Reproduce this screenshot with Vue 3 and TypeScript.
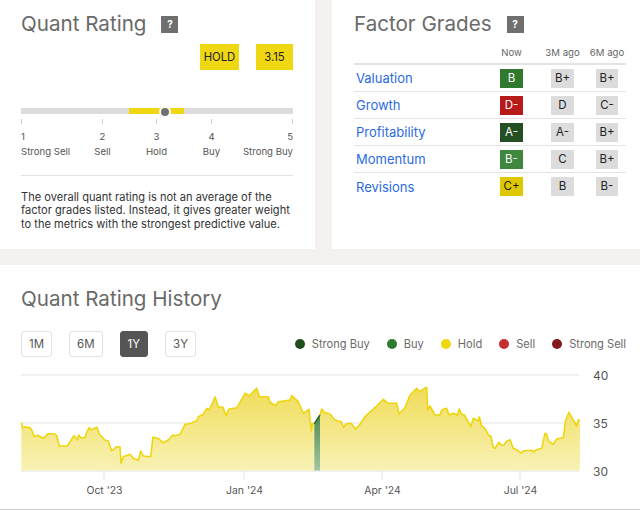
<script setup lang="ts">
const scale = [
  { n: 1, label: 'Strong Sell' },
  { n: 2, label: 'Sell' },
  { n: 3, label: 'Hold' },
  { n: 4, label: 'Buy' },
  { n: 5, label: 'Strong Buy' }
]

const factors = [
  { name: 'Valuation', now: 'B', tone: 'buy', m3: 'B+', m6: 'B+' },
  { name: 'Growth', now: 'D-', tone: 'sell', m3: 'D', m6: 'C-' },
  { name: 'Profitability', now: 'A-', tone: 'strong', m3: 'A-', m6: 'B+' },
  { name: 'Momentum', now: 'B-', tone: 'buy2', m3: 'C', m6: 'B+' },
  { name: 'Revisions', now: 'C+', tone: 'hold', m3: 'B', m6: 'B-' }
]

const ranges = ['1M', '6M', '1Y', '3Y']

const legend = [
  { label: 'Strong Buy', color: '#1f4d1c' },
  { label: 'Buy', color: '#2f7a2f' },
  { label: 'Hold', color: '#f0d80f' },
  { label: 'Sell', color: '#c62f2f' },
  { label: 'Strong Sell', color: '#84191b' }
]

// traced at 3x from the chart, each run has its own x offset
const run = (ox: number, pts: number[][]) =>
  pts.map(([x, y]) => [+(x / 3 + ox).toFixed(1), +(y / 3).toFixed(1)])

const before = [
  ...run(0, [[64,143],[68,158],[75,155],[80,158],[88,156],[95,165],[103,185],[113,181],[130,190],[145,176],[162,176],[170,182],[178,213],[202,213],[222,182],[232,195],[236,180],[243,188],[255,188],[260,172],[268,157],[272,165],[291,157],[298,177],[315,195],[325,198],[335,228],[350,215],[360,216],[363,265],[370,245],[390,238],[400,250],[415,256],[422,228],[430,243],[452,245],[459,186],[478,192],[483,198],[490,203],[505,195],[518,180],[525,182],[540,178],[555,148],[575,145],[580,140],[590,138],[595,125],[610,118],[620,100],[627,105],[640,80]]),
  ...run(215, [[0,65],[10,95],[24,97],[33,122],[42,102],[66,98],[90,55],[103,62],[125,40],[133,65],[160,65],[165,82],[183,92],[190,80],[225,75],[230,62],[250,80],[265,115],[282,103],[289,168],[292,146],[298,146]])
]
const jump = run(215, [[298,146],[315,120]])
const after = [
  ...run(215, [[315,120],[320,102],[328,112],[345,117],[360,135],[378,140],[386,157],[392,147],[408,145],[422,162],[435,148],[450,125],[480,98],[490,88],[505,73],[520,85],[545,85],[552,117],[570,98],[585,60],[605,40],[615,50],[632,37]]),
  ...run(425, [[5,38],[8,105],[15,93],[30,120],[45,120],[50,105],[65,100],[72,120],[85,115],[97,120],[103,102],[110,118],[118,120],[138,155],[145,130],[160,138],[163,125],[170,153],[178,158],[192,182],[197,182],[205,218],[210,220],[222,202],[228,210],[238,210],[243,200],[255,194],[265,220],[275,224],[287,234],[297,227],[320,226],[327,231],[332,225],[350,220],[360,175],[365,178],[370,198],[385,208],[395,192],[415,188],[422,135],[432,112],[455,153],[460,135],[465,135]])
]

const base = 95.5
const toLine = (pts: number[][]) => pts.map((p) => p.join(',')).join(' ')
const toArea = (pts: number[][]) =>
  `${pts[0][0]},${base} ${toLine(pts)} ${pts[pts.length - 1][0]},${base}`

const grid = [
  { y: 0, label: '40' },
  { y: 48, label: '35' },
  { y: 96, label: '30' }
]
const months = [
  { x: 104, label: "Oct '23" },
  { x: 244, label: "Jan '24" },
  { x: 382, label: "Apr '24" },
  { x: 520, label: "Jul '24" }
]
</script>

<template>
  <div class="page">
    <div class="top">
      <section class="card rating">
        <div class="head">
          <h2>Quant Rating</h2>
          <span class="help">?</span>
        </div>
        <div class="badges">
          <span class="badge">HOLD</span>
          <span class="badge">3.15</span>
        </div>
        <div class="track">
          <div class="fill"></div>
          <div class="dot"></div>
        </div>
        <div class="scale">
          <div v-for="s in scale" :key="s.n" class="step">
            <i></i>
            <span class="num">{{ s.n }}</span>
            <span class="lbl">{{ s.label }}</span>
          </div>
        </div>
        <p class="note">
          The overall quant rating is not an average of the factor grades listed. Instead, it gives greater weight
          to the metrics with the strongest predictive value.
        </p>
      </section>

      <section class="card grades">
        <div class="head">
          <h2>Factor Grades</h2>
          <span class="help">?</span>
        </div>
        <div class="row header">
          <span></span>
          <span>Now</span>
          <span>3M ago</span>
          <span>6M ago</span>
        </div>
        <div v-for="f in factors" :key="f.name" class="row">
          <a class="name">{{ f.name }}</a>
          <span class="grade" :class="f.tone">{{ f.now }}</span>
          <span class="grade">{{ f.m3 }}</span>
          <span class="grade">{{ f.m6 }}</span>
        </div>
      </section>
    </div>

    <section class="card history">
      <h2>Quant Rating History</h2>
      <div class="controls">
        <div class="ranges">
          <button v-for="r in ranges" :key="r" :class="{ active: r === '1Y' }">{{ r }}</button>
        </div>
        <ul class="legend">
          <li v-for="l in legend" :key="l.label">
            <i :style="{ background: l.color }"></i>{{ l.label }}
          </li>
        </ul>
      </div>
      <svg class="chart" width="640" height="126" viewBox="0 375 640 126">
        <defs>
          <linearGradient id="holdFill" gradientUnits="userSpaceOnUse" x1="0" y1="0" x2="0" y2="96">
            <stop offset="0" stop-color="#efd94a" />
            <stop offset="1" stop-color="#f8f2b6" />
          </linearGradient>
          <linearGradient id="buyFill" gradientUnits="userSpaceOnUse" x1="0" y1="40" x2="0" y2="96">
            <stop offset="0" stop-color="#4f8a55" />
            <stop offset="1" stop-color="#a3c6a0" />
          </linearGradient>
        </defs>
        <g transform="translate(0 375)">
          <line v-for="g in grid" :key="g.y" x1="21" x2="579" :y1="g.y" :y2="g.y" class="gridline" />
          <polygon :points="toArea(before)" fill="url(#holdFill)" />
          <polygon :points="toArea(jump)" fill="url(#buyFill)" />
          <polygon :points="toArea(after)" fill="url(#holdFill)" />
          <polyline :points="toLine(before)" class="line" />
          <polyline :points="toLine(jump)" class="line green" />
          <polyline :points="toLine(after)" class="line" />
          <text v-for="g in grid" :key="g.label" x="593" :y="g.y + 5" class="ytick">{{ g.label }}</text>
          <g v-for="m in months" :key="m.x">
            <line :x1="m.x" :x2="m.x" y1="96" y2="105" class="gridline" />
            <text :x="m.x + 0.5" y="119" text-anchor="middle" class="xtick">{{ m.label }}</text>
          </g>
        </g>
      </svg>
    </section>
  </div>
</template>

<style>
html, body {
  background: #f5f1f0;
}
</style>

<style scoped>
.page {
  width: 640px;
  height: 510px;
  overflow: hidden;
  font-family: Inter, "Liberation Sans", sans-serif;
  border-bottom: 1px solid #cfcfcf;
  box-sizing: border-box;
}

.top {
  display: flex;
  justify-content: space-between;
  height: 249px;
  margin-bottom: 16px;
}

.card {
  background: #fff;
  box-sizing: border-box;
}

.rating {
  width: 315px;
  padding: 8px 22px 0 21px;
}

.grades {
  width: 308px;
  padding: 8px 14px 0 22px;
}

.head {
  display: flex;
  align-items: center;
  height: 32px;
}

h2 {
  margin: 0;
  font-size: 20.6px;
  font-weight: 400;
  line-height: 32px;
  color: #6a6a6a;
}

.help {
  width: 17px;
  height: 17px;
  margin-left: 15px;
  background: #6f6f6f;
  color: #fff;
  font-size: 10px;
  font-weight: 700;
  line-height: 17px;
  text-align: center;
}

.badges {
  display: flex;
  justify-content: flex-end;
  gap: 17px;
  margin-top: 4px;
}

.badge {
  width: 39px;
  height: 26px;
  background: #efd711;
  color: #222;
  font-size: 11.3px;
  line-height: 27px;
  text-align: center;
}

.badge:last-child {
  width: 37px;
}

.track {
  position: relative;
  height: 6px;
  margin-top: 38px;
  background: #dcdcdc;
}

.fill {
  position: absolute;
  left: 108px;
  width: 55px;
  height: 100%;
  background: #efd711;
}

.dot {
  position: absolute;
  left: 138px;
  top: -2px;
  width: 8px;
  height: 8px;
  border: 2px solid #fff;
  border-radius: 50%;
  background: #6f6f6f;
}

.scale {
  display: grid;
  grid-template-columns: 81px 54px 55px 81px 1px;
  margin-top: 5px;
  height: 56px;
  border-bottom: 1px solid #e3e3e3;
}

.step {
  display: flex;
  flex-direction: column;
  align-items: center;
  width: 1px;
  font-size: 9.6px;
  color: #555;
  white-space: nowrap;
}

.step:first-child {
  align-items: flex-start;
}

.step:last-child {
  align-items: flex-end;
}

.step i {
  width: 1px;
  height: 5px;
  background: #cfcfcf;
}

.num {
  margin-top: 5px;
  line-height: 15px;
}

.lbl {
  line-height: 16px;
}

.note {
  margin: 15px 0 0;
  font-size: 11.1px;
  line-height: 13.4px;
  color: #333;
}

.row {
  display: grid;
  grid-template-columns: 146px 23px 28px 23px 22px 22px 8px;
  align-items: center;
  height: 27px;
  border-bottom: 1px solid #e4e4e4;
  box-sizing: border-box;
}

.row > :nth-child(2) {
  grid-column: 2;
}

.row > :nth-child(3) {
  grid-column: 4;
}

.row > :nth-child(4) {
  grid-column: 6;
}

.row:last-child {
  border-bottom: 0;
}

.header {
  height: 18px;
  margin-top: 7px;
  border-bottom-width: 2px;
  font-size: 9.6px;
  line-height: 12px;
  color: #666;
  white-space: nowrap;
  text-align: center;
}

.header span {
  display: flex;
  justify-content: center;
  align-self: start;
}

.name {
  padding-left: 2px;
  font-size: 13px;
  color: #2b6be0;
}

.grade {
  height: 19px;
  background: #dcdcdc;
  color: #222;
  font-size: 11.5px;
  line-height: 19px;
  text-align: center;
}

.buy {
  background: #2f7a2f;
  color: #fff;
}

.buy2 {
  background: #3f863f;
  color: #fff;
}

.strong {
  background: #234f22;
  color: #fff;
}

.sell {
  background: #b81a1a;
  color: #fff;
}

.hold {
  background: #e0c800;
  color: #222;
}

.history {
  height: 244px;
}

.history h2 {
  padding: 18px 0 0 21px;
  line-height: 32px;
}

.controls {
  display: flex;
  justify-content: space-between;
  align-items: center;
  padding: 16px 14px 0 21px;
}

.ranges {
  display: flex;
  gap: 17px;
}

button {
  height: 26px;
  padding: 0 7px;
  border: 1px solid #e2e2e2;
  border-radius: 3px;
  background: #fff;
  color: #555;
  font-family: inherit;
  font-size: 11.5px;
}

button.active {
  background: #555;
  border-color: #555;
  color: #fff;
}

.legend {
  display: flex;
  gap: 17px;
  margin: 0;
  padding: 0;
  list-style: none;
  font-size: 11.1px;
  color: #6a6a6a;
}

.legend li {
  display: flex;
  align-items: center;
  gap: 7px;
}

.legend i {
  width: 10px;
  height: 10px;
  border-radius: 50%;
}

.chart {
  display: block;
  margin-top: 18px;
  overflow: visible;
}

.gridline {
  stroke: #e3e3e3;
  stroke-width: 1;
}

.line {
  fill: none;
  stroke: #eed60f;
  stroke-width: 1.6;
  stroke-linejoin: round;
}

.line.green {
  stroke: #2f6a2f;
}

.ytick {
  font-size: 12px;
  fill: #555;
}

.xtick {
  font-size: 10.4px;
  fill: #555;
}
</style>
